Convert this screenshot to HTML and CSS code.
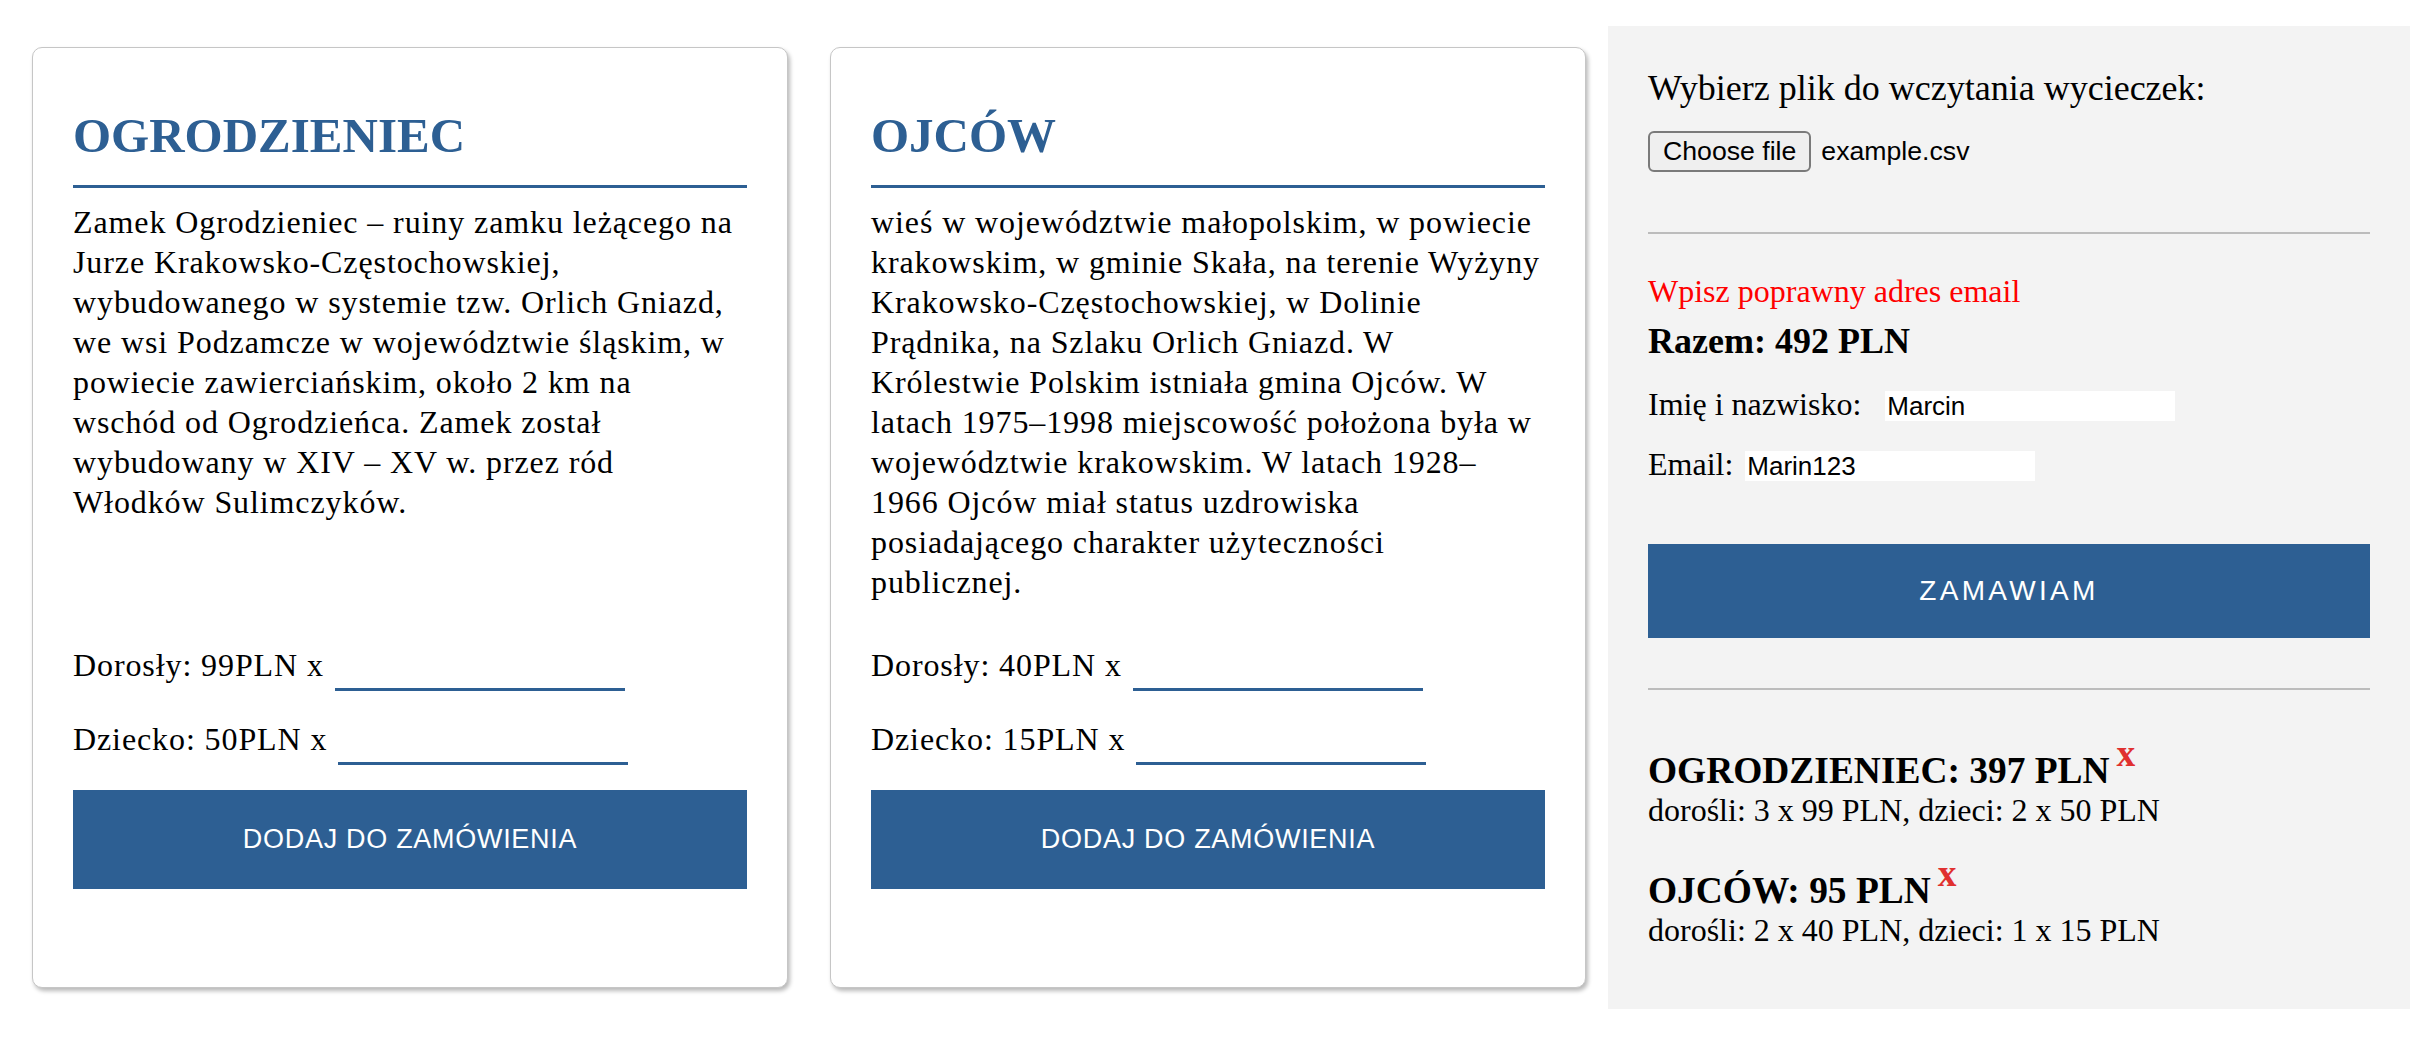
FILE: index.html
```html
<!DOCTYPE html>
<html lang="pl">
<head>
<meta charset="utf-8">
<title>Wycieczki</title>
<link rel="stylesheet" href="styles.css">
</head>
<body>
<div class="page">
  <main class="cards">
    <article class="card">
      <h2 class="card-title">OGRODZIENIEC</h2>
      <p class="card-desc">Zamek Ogrodzieniec – ruiny zamku leżącego na Jurze Krakowsko-Częstochowskiej, wybudowanego w systemie tzw. Orlich Gniazd, we wsi Podzamcze w województwie śląskim, w powiecie zawierciańskim, około 2 km na wschód od Ogrodzieńca. Zamek został wybudowany w XIV – XV w. przez ród Włodków Sulimczyków.</p>
      <div class="qty">
        <label class="qty-row"><span>Dorosły: 99PLN x</span><input class="qty-input" type="number"></label>
        <label class="qty-row"><span>Dziecko: 50PLN x</span><input class="qty-input" type="number"></label>
      </div>
      <button class="btn btn-add" type="button">DODAJ DO ZAMÓWIENIA</button>
    </article>
    <article class="card">
      <h2 class="card-title">OJCÓW</h2>
      <p class="card-desc">wieś w województwie małopolskim, w powiecie krakowskim, w gminie Skała, na terenie Wyżyny Krakowsko-Częstochowskiej, w Dolinie Prądnika, na Szlaku Orlich Gniazd. W Królestwie Polskim istniała gmina Ojców. W latach 1975–1998 miejscowość położona była w województwie krakowskim. W latach 1928–1966 Ojców miał status uzdrowiska posiadającego charakter użyteczności publicznej.</p>
      <div class="qty">
        <label class="qty-row"><span>Dorosły: 40PLN x</span><input class="qty-input" type="number"></label>
        <label class="qty-row"><span>Dziecko: 15PLN x</span><input class="qty-input" type="number"></label>
      </div>
      <button class="btn btn-add" type="button">DODAJ DO ZAMÓWIENIA</button>
    </article>
  </main>
  <aside class="panel">
    <div class="file-label">Wybierz plik do wczytania wycieczek:</div>
    <div class="file-row">
      <button class="file-btn" type="button">Choose file</button>
      <span class="file-name">example.csv</span>
    </div>
    <hr class="divider divider-top">
    <div class="error">Wpisz poprawny adres email</div>
    <div class="total">Razem: 492 PLN</div>
    <label class="field field-name"><span>Imię i nazwisko:</span><input class="field-input" type="text" value="Marcin"></label>
    <label class="field field-email"><span>Email:</span><input class="field-input" type="text" value="Marin123"></label>
    <button class="btn btn-order" type="button">ZAMAWIAM</button>
    <hr class="divider divider-bottom">
    <div class="summary">
      <div class="summary-item">
        <h3 class="summary-title">OGRODZIENIEC: 397 PLN<span class="remove">x</span></h3>
        <div class="summary-detail">dorośli: 3 x 99 PLN, dzieci: 2 x 50 PLN</div>
      </div>
      <div class="summary-item">
        <h3 class="summary-title">OJCÓW: 95 PLN<span class="remove">x</span></h3>
        <div class="summary-detail">dorośli: 2 x 40 PLN, dzieci: 1 x 15 PLN</div>
      </div>
    </div>
  </aside>
</div>
</body>
</html>
```

FILE: styles.css
```css
html, body {
  margin: 0;
  padding: 0;
  background: #ffffff;
}

body {
  font-family: "Liberation Serif", "Times New Roman", serif;
  color: #000;
}

.page {
  display: flex;
  align-items: stretch;
  padding: 26px 24px 0 32px;
  width: 2434px;
  box-sizing: border-box;
}

/* ---------- cards ---------- */

.cards {
  flex: 1;
  display: flex;
  gap: 42px;
}

.card {
  flex: 1 1 0;
  box-sizing: border-box;
  margin: 21px 0;
  padding: 20px 40px 98px;
  display: flex;
  flex-direction: column;
  background: #fff;
  border: 1px solid #c6c6c6;
  border-radius: 10px;
  box-shadow: 2px 3px 4px rgba(0, 0, 0, 0.28);
}

.card-title {
  margin: 40px 0 0;
  padding-bottom: 21px;
  border-bottom: 3px solid #2d5f93;
  font-size: 49px;
  line-height: 56px;
  font-weight: bold;
  color: #2d5f93;
}

.card-desc {
  flex: 1;
  margin: 14px 4px 0 0;
  font-size: 32px;
  line-height: 40px;
  letter-spacing: 0.9px;
}

.qty {
  margin-top: 43px;
  display: flex;
  flex-direction: column;
  gap: 28px;
}

.qty-row {
  display: flex;
  align-items: flex-start;
  gap: 11px;
  font-size: 32px;
  line-height: 40px;
  letter-spacing: 0.9px;
}

.qty-input {
  box-sizing: border-box;
  width: 290px;
  height: 46px;
  margin: 0;
  padding: 0 4px;
  border: 0;
  border-bottom: 3px solid #2d5f93;
  background: transparent;
  font-family: "Liberation Sans", Arial, sans-serif;
  font-size: 26px;
  outline: none;
}

.btn {
  display: flex;
  align-items: center;
  justify-content: center;
  width: 100%;
  margin: 0;
  padding: 0;
  border: 0;
  background: #2d5f93;
  color: #fff;
  font-family: "Liberation Sans", Arial, sans-serif;
}

.btn-add {
  margin-top: 25px;
  height: 99px;
  font-size: 27px;
  letter-spacing: 0.7px;
}

/* ---------- side panel ---------- */

.panel {
  flex: 0 0 802px;
  box-sizing: border-box;
  width: 802px;
  margin-left: 22px;
  padding: 41px 40px 61px;
  background: #f3f3f3;
}

.file-label {
  font-size: 36px;
  line-height: 42px;
}

.file-row {
  display: flex;
  align-items: center;
  gap: 10px;
  margin-top: 22px;
  font-family: "Liberation Sans", Arial, sans-serif;
  font-size: 26.67px;
}

.file-btn {
  box-sizing: border-box;
  height: 41px;
  padding: 0 13px;
  border: 2px solid #7a7a7a;
  border-radius: 6px;
  background: #efefef;
  color: #000;
  font-family: inherit;
  font-size: 26.67px;
}

.divider {
  margin: 0;
  height: 0;
  border: 0;
  border-top: 2px solid #bcbcbc;
}

.divider-top {
  margin-top: 60px;
}

.divider-bottom {
  margin-top: 50px;
}

.error {
  margin-top: 37px;
  color: #ff0000;
  font-size: 32px;
  line-height: 40px;
}

.total {
  margin-top: 9px;
  font-size: 36px;
  line-height: 42px;
  font-weight: bold;
}

.field {
  display: flex;
  align-items: baseline;
  gap: 12px;
  font-size: 32px;
  line-height: 40px;
}

.field-name {
  margin-top: 22px;
  gap: 24px;
}

.field-email {
  margin-top: 20px;
}

.field-input {
  box-sizing: border-box;
  width: 290px;
  height: 30px;
  margin: 0;
  padding: 0 2px;
  border: 0;
  background: #fff;
  font-family: "Liberation Sans", Arial, sans-serif;
  font-size: 26px;
  line-height: 30px;
  color: #000;
  outline: none;
}

.btn-order {
  margin-top: 60px;
  height: 94px;
  font-size: 28px;
  letter-spacing: 3.3px;
}

.summary {
  margin-top: 60px;
  display: flex;
  flex-direction: column;
  gap: 42px;
}

.summary-title {
  margin: 0;
  font-size: 37.44px;
  line-height: 42px;
  font-weight: bold;
}

.remove {
  position: relative;
  top: -17px;
  margin-left: 7px;
  color: #e0302f;
}

.summary-detail {
  font-size: 32px;
  line-height: 36px;
}
```
